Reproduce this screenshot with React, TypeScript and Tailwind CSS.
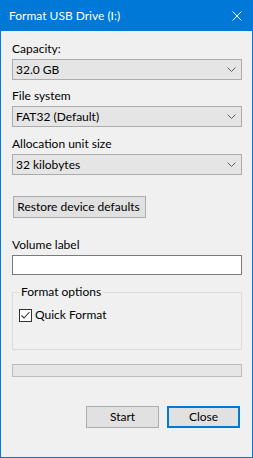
import React from "react";

const font = { fontFamily: '"Segoe UI", Lato, "Noto Sans", sans-serif' };

function Chevron() {
  return (
    <svg width="9" height="5" viewBox="0 0 9 5" className="shrink-0">
      <polyline points="0.5,0.5 4.5,4.5 8.5,0.5" fill="none" stroke="#606060" strokeWidth="1" />
    </svg>
  );
}

function Combo({ value }: { value: string }) {
  return (
    <div className="mt-[2px] flex h-[21px] items-center justify-between border border-[#acacac] bg-[#e5e5e5] pl-[3px] pr-[5px]">
      <span className="leading-[16px]">{value}</span>
      <Chevron />
    </div>
  );
}

export default function App() {
  return (
    <div
      style={font}
      className="flex h-[458px] w-[253px] flex-col border border-t-0 border-[#0078d7] bg-[#f0f0f0] text-[12px] text-black"
    >
      {/* title bar */}
      <div className="flex h-[31px] shrink-0 items-center justify-between bg-[#0078d7] pl-[8px] pr-[10px] text-white">
        <span className="leading-[16px]">Format USB Drive (I:)</span>
        <svg width="10" height="10" viewBox="0 0 10 10">
          <path d="M0.5 0.5 L9.5 9.5 M9.5 0.5 L0.5 9.5" stroke="#fff" strokeWidth="1" />
        </svg>
      </div>

      <div className="flex flex-1 flex-col pl-[11px] pr-[10px]">
        <div className="mt-[10px] leading-[16px]">Capacity:</div>
        <Combo value="32.0 GB" />

        <div className="mt-[8px] leading-[16px]">File system</div>
        <Combo value="FAT32 (Default)" />

        <div className="mt-[9px] leading-[16px]">Allocation unit size</div>
        <Combo value="32 kilobytes" />

        <div className="mt-[21px]">
          <button className="ml-[1px] h-[22px] w-[133px] border border-[#adadad] bg-[#e1e1e1] pr-[2px] text-center leading-[16px]">
            Restore device defaults
          </button>
        </div>

        <div className="mt-[19px] leading-[16px]">Volume label</div>
        <div className="mt-[2px] h-[20px] border border-[#7a7a7a] bg-white" />

        <fieldset className="mt-[9px] h-[66px] border border-[#dcdcdc] pl-[6px]">
          <legend className="px-[2px] leading-[16px]">Format options</legend>
          <div className="mt-[7px] flex items-center gap-[3px]">
            <svg width="13" height="13" viewBox="0 0 13 13" className="shrink-0">
              <rect x="0.5" y="0.5" width="12" height="12" fill="#fff" stroke="#333" />
              <polyline points="2.5,6.5 5,9 10.5,3" fill="none" stroke="#333" strokeWidth="1.1" />
            </svg>
            <span className="leading-[16px]">Quick Format</span>
          </div>
        </fieldset>

        <div className="mt-[14px] h-[13px] border border-[#bcbcbc] bg-[#e6e6e6]" />

        <div className="mt-[29px] mr-[2px] flex justify-end gap-[8px]">
          <button className="h-[22px] w-[73px] border border-[#adadad] bg-[#e1e1e1] leading-[16px]">Start</button>
          <button className="h-[22px] w-[73px] border-2 border-[#0078d7] bg-[#e1e1e1] leading-[16px]">Close</button>
        </div>
      </div>
    </div>
  );
}
